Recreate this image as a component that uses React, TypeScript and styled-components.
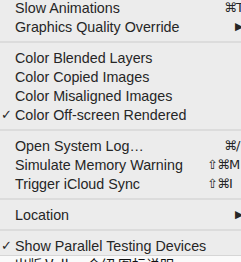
import React from 'react';
import styled, { createGlobalStyle } from 'styled-components';

const GlobalStyle = createGlobalStyle`
  html, body {
    margin: 0;
    padding: 0;
    width: 241px;
    height: 262px;
    overflow: hidden;
    background: #ffffff;
  }
`;

const Page = styled.div`
  width: 241px;
  height: 262px;
  overflow: hidden;
  display: flex;
  flex-direction: column;
`;

const Menu = styled.div`
  width: 262px;
  flex: 0 0 256px;
  background: #ececec;
  display: flex;
  flex-direction: column;
  margin-top: -2px;
  font-family: 'Liberation Sans', Arial, sans-serif;
  font-size: 14.3px;
  color: #262626;
`;

const Row = styled.div`
  height: 19px;
  display: flex;
  align-items: center;
  position: relative;
  padding-left: 15px;
  white-space: nowrap;
`;

const Check = styled.span`
  position: absolute;
  left: 1px;
  font-family: 'DejaVu Sans', sans-serif;
  font-size: 13px;
`;

const Label = styled.span`
  flex: 1;
`;

const Shortcut = styled.span<{ $w: number }>`
  width: ${(p) => p.$w}px;
  font-family: 'DejaVu Sans', sans-serif;
  font-size: 13px;
  letter-spacing: -1px;
`;

const Arrow = styled.span`
  width: 27px;
  font-size: 11px;
  font-family: 'DejaVu Sans', sans-serif;
`;

const Separator = styled.div`
  height: 12px;
  display: flex;
  align-items: center;
  &::after {
    content: '';
    flex: 1;
    height: 2px;
    background: #dcdcdc;
  }
`;

const Below = styled.div`
  flex: 1;
  background: #fafafa;
  border-top: 1px solid #d6d6d6;
  overflow: hidden;
`;

const Clipped = styled.div`
  font-family: 'Noto Sans CJK SC', sans-serif;
  font-size: 14px;
  color: #111;
  line-height: 14px;
  margin-top: 1px;
  padding-left: 14px;
  white-space: nowrap;
`;

type Item = {
  label: string;
  checked?: boolean;
  shortcut?: string;
  shortcutWidth?: number;
  submenu?: boolean;
};

const groups: Item[][] = [
  [
    { label: 'Slow Animations', shortcut: '⌘T', shortcutWidth: 38 },
    { label: 'Graphics Quality Override', submenu: true },
  ],
  [
    { label: 'Color Blended Layers' },
    { label: 'Color Copied Images' },
    { label: 'Color Misaligned Images' },
    { label: 'Color Off-screen Rendered', checked: true },
  ],
  [
    { label: 'Open System Log…', shortcut: '⌘/', shortcutWidth: 38 },
    { label: 'Simulate Memory Warning', shortcut: '⇧⌘M', shortcutWidth: 55 },
    { label: 'Trigger iCloud Sync', shortcut: '⇧⌘I', shortcutWidth: 55 },
  ],
  [{ label: 'Location', submenu: true }],
  [{ label: 'Show Parallel Testing Devices', checked: true }],
];

export default function App() {
  return (
    <Page>
      <GlobalStyle />
      <Menu>
        {groups.map((group, gi) => (
          <React.Fragment key={gi}>
            {gi > 0 && <Separator />}
            {group.map((item) => (
              <Row key={item.label}>
                {item.checked && <Check>✓</Check>}
                <Label>{item.label}</Label>
                {item.shortcut && <Shortcut $w={item.shortcutWidth || 38}>{item.shortcut}</Shortcut>}
                {item.submenu && <Arrow>▶</Arrow>}
              </Row>
            ))}
          </React.Fragment>
        ))}
      </Menu>
      <Below>
        <Clipped>出版 Valley 介绍 图标说明</Clipped>
      </Below>
    </Page>
  );
}
